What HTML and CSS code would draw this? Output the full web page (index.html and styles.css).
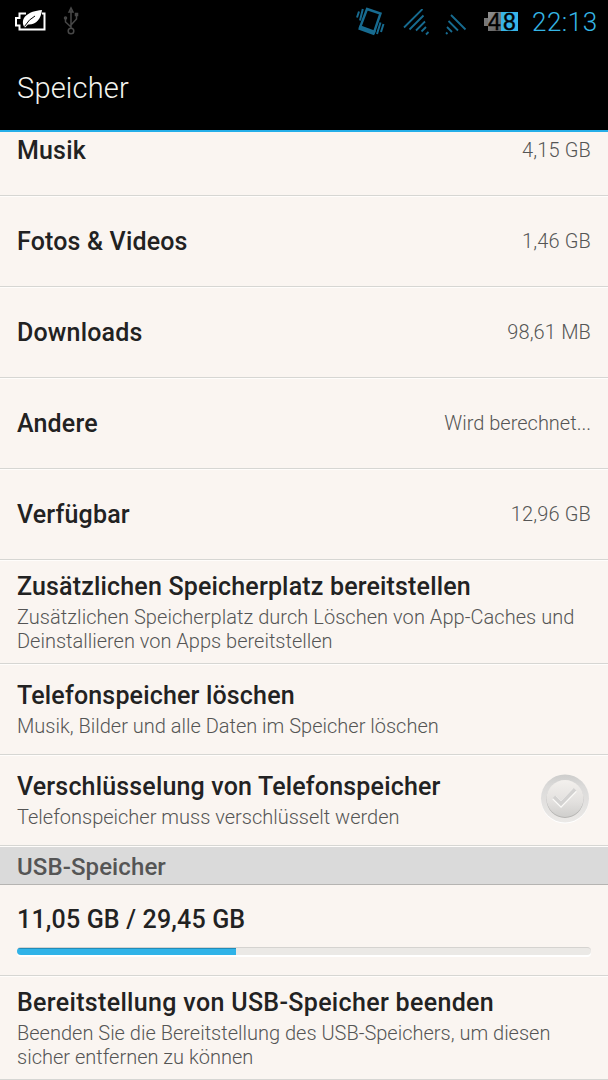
FILE: index.html
```html
<!DOCTYPE html>
<html lang="de">
<head>
<meta charset="utf-8">
<title>Speicher</title>
<link rel="stylesheet" href="styles.css">
</head>
<body>
<header class="top">
  <div class="status">
    <svg class="battery-leaf" width="32" height="24" viewBox="0 0 32 24">
      <path d="M11 4.500H4.500V9H1V16.500H4.500V20.500H29.500V4.500H27" fill="none" stroke="#fff" stroke-width="2"/>
      <path d="M27 1C26 10 21 16 13 15.500L10 18.500L9 17.500C5 9 13 2 27 1Z" fill="#fff"/>
      <path d="M9.500 17.500Q14 10 20 7" fill="none" stroke="#000" stroke-width="1"/>
    </svg>
    <svg class="usb" width="16" height="30" viewBox="0 0 16 30" fill="none" stroke="#484848" stroke-width="1.500">
      <path d="M8 22V4M8 21L2.500 16V12M8 19L13.500 13V8"/>
      <path d="M6 6L8 2L10 6Z"/>
      <circle cx="8" cy="25" r="2.800"/>
      <circle cx="2.500" cy="12" r="1"/>
      <path d="M12.500 7.500h2v2h-2z"/>
    </svg>
    <span class="spacer"></span>
    <svg class="vibrate" width="30" height="30" viewBox="0 0 30 30" fill="none" stroke="#176b90">
      <path d="M11 3L24.500 7.500L18 26.500L4 21.500Z" stroke-width="2.400"/>
      <path d="M4.500 20.500L18.500 25.500L17.500 28L3.500 23Z" fill="#176b90" stroke-width="2"/>
      <path d="M6.800 3L4 14.500M3 5.500L1 11.500M24.500 16.500L21 28M27.500 18L25 26" stroke-width="2"/>
    </svg>
    <svg class="signal" width="27" height="28" viewBox="0 0 27 28" fill="none" stroke="#176b90" stroke-width="1.800">
      <path d="M1 18.500L19.500 0M6.500 20.500L20.500 6.500M13 21.500L22 12.500M18.500 22.500L23 18M23 25.500L25.500 23"/>
    </svg>
    <svg class="wifi" width="22" height="22" viewBox="0 0 22 22" fill="none" stroke="#176b90" stroke-width="1.800">
      <path d="M6 1L20.500 15.500M3.500 7L13 16.500M2 13L7 18M1 18.500L2.500 20"/>
    </svg>
    <div class="charge">
      <span class="cap"></span><span class="ten">4</span><span class="one">8</span>
    </div>
    <span class="clock">22:13</span>
  </div>
  <h1 class="heading">Speicher</h1>
</header>
<main class="list">
  <div class="row first"><b class="title">Musik</b><span class="value">4,15 GB</span></div>
  <div class="row"><b class="title">Fotos &amp; Videos</b><span class="value">1,46 GB</span></div>
  <div class="row"><b class="title">Downloads</b><span class="value">98,61 MB</span></div>
  <div class="row"><b class="title">Andere</b><span class="value words">Wird berechnet...</span></div>
  <div class="row"><b class="title">Verfügbar</b><span class="value">12,96 GB</span></div>
  <div class="row tall"><div><b class="title">Zusätzlichen Speicherplatz bereitstellen</b><p class="sub"><span class="caches">Zusätzlichen Speicherplatz durch Löschen von App-Caches und</span><br>Deinstallieren von Apps bereitstellen</p></div></div>
  <div class="row pair"><div><b class="title">Telefonspeicher löschen</b><p class="sub">Musik, Bilder und alle Daten im Speicher löschen</p></div></div>
  <div class="row pair"><div><b class="title">Verschlüsselung von Telefonspeicher</b><p class="sub">Telefonspeicher muss verschlüsselt werden</p></div>
    <svg class="check" width="50" height="50" viewBox="0 0 50 50">
      <defs>
        <linearGradient id="ring" x2="0" y2="1"><stop stop-color="#cdcdcc"/><stop offset=".25" stop-color="#dbdad9"/><stop offset="1" stop-color="#ebe9e7"/></linearGradient>
        <linearGradient id="knob" x2="0" y2="1"><stop stop-color="#f3f0ed"/><stop offset=".6" stop-color="#e2e0de"/><stop offset="1" stop-color="#cfcecc"/></linearGradient>
      </defs>
      <circle cx="25" cy="25.500" r="24" fill="#fff"/>
      <circle cx="25" cy="24.500" r="24" fill="url(#ring)"/>
      <circle cx="25" cy="25.500" r="18.500" fill="#b5b4b2"/>
      <circle cx="25" cy="24.500" r="18.500" fill="url(#knob)"/>
      <path d="M14 23.500L21 30.500L35 16" fill="none" stroke="#fbfaf8" stroke-width="5"/>
      <path d="M14 22.800L21 29.800L35 15.300" fill="none" stroke="#d3d2d1" stroke-width="3.500"/>
    </svg>
  </div>
  <h2 class="section">USB-Speicher</h2>
  <div class="row usage"><b class="title">11,05 GB / 29,45 GB</b><div class="track"><div class="fill"></div></div></div>
  <div class="row tall"><div><b class="title eject">Bereitstellung von USB-Speicher beenden</b><p class="sub">Beenden Sie die Bereitstellung des USB-Speichers, um diesen<br>sicher entfernen zu können</p></div></div>
</main>
</body>
</html>
```
FILE: styles.css
```css
* { box-sizing: border-box; }
body { margin: 0; width: 608px; height: 1080px; overflow: hidden; background: #faf5f1; font-family: Roboto, sans-serif; color: #222; }
.top { height: 132px; background: #000; border-bottom: 2px solid #25aee8; }
.status { display: flex; align-items: flex-start; height: 46px; padding: 0 8px 0 15px; }
.status svg { flex: none; }
.battery-leaf { margin-top: 9px; }
.usb { margin: 6px 0 0 16px; }
.spacer { flex: 1; }
.vibrate { margin: 6px 17px 0 0; }
.signal { margin: 9px 15px 0 0; }
.wifi { margin: 14px 17px 0 0; }
.charge { display: flex; height: 19px; width: 34px; margin: 12px 14px 0 0; align-items: center; font: 23px/20px "Liberation Sans", sans-serif; color: #000; }
.cap { width: 4px; height: 8px; background: #777; }
.ten, .one { height: 19px; text-align: center; -webkit-text-stroke: .4px #000; }
.ten { width: 13px; background: linear-gradient(135deg, #929292, #5d5d5d); }
.one { width: 17px; background: #37b5e8; }
.clock { font-weight: 300; font-size: 26px; letter-spacing: .5px; line-height: 44px; color: #35b5e5; width: 68px; white-space: nowrap; }
.heading { margin: 0; padding-left: 17px; font-weight: 300; font-size: 29px; letter-spacing: .2px; line-height: 84px; color: #f3f3ee; }
.list { height: 948px; overflow: hidden; }
.row { display: flex; align-items: center; justify-content: space-between; height: 91px; padding: 0 17px 1px; border-bottom: 1px solid #d6d6d3; box-shadow: 0 1px #fffdfb; white-space: nowrap; }
.row.first { margin-top: -27px; }
.row.tall { height: 104px; }
.row.pair { padding-bottom: 0; }
.title { display: block; font-weight: 500; font-size: 25px; letter-spacing: .17px; line-height: 32px; padding-top: 1px; margin-bottom: -1px; }
.title.eject { letter-spacing: .33px; }
.pair .title { padding-top: 0; margin-bottom: 0; }
.value { font-weight: 300; font-size: 20px; letter-spacing: .15px; color: #555; }
.value.words { letter-spacing: 0; }
.sub { margin: 2px 0 0; font-weight: 300; font-size: 20px; line-height: 24px; color: #555; }
.tall .sub { margin-top: 3px; }
.caches { letter-spacing: .05px; }
.check { margin: -3px 1px 0 0; flex: none; }
.section { margin: 1px 0 0; height: 38px; padding-left: 17px; background: #dadada; border-bottom: 1px solid #b5b4b2; font-weight: 500; font-size: 24px; letter-spacing: .1px; line-height: 41px; color: #555; }
.row.usage { display: block; padding-top: 18px; }
.track { height: 8px; margin-top: 12px; border-radius: 4px; overflow: hidden; background: #ebe9e6; border-top: 1px solid #d5d3d0; box-shadow: 0 2px #fff; }
.fill { width: 219px; height: 8px; margin-top: -1px; background: #30b3e8; border-top: 2px solid #218cb8; }
```
